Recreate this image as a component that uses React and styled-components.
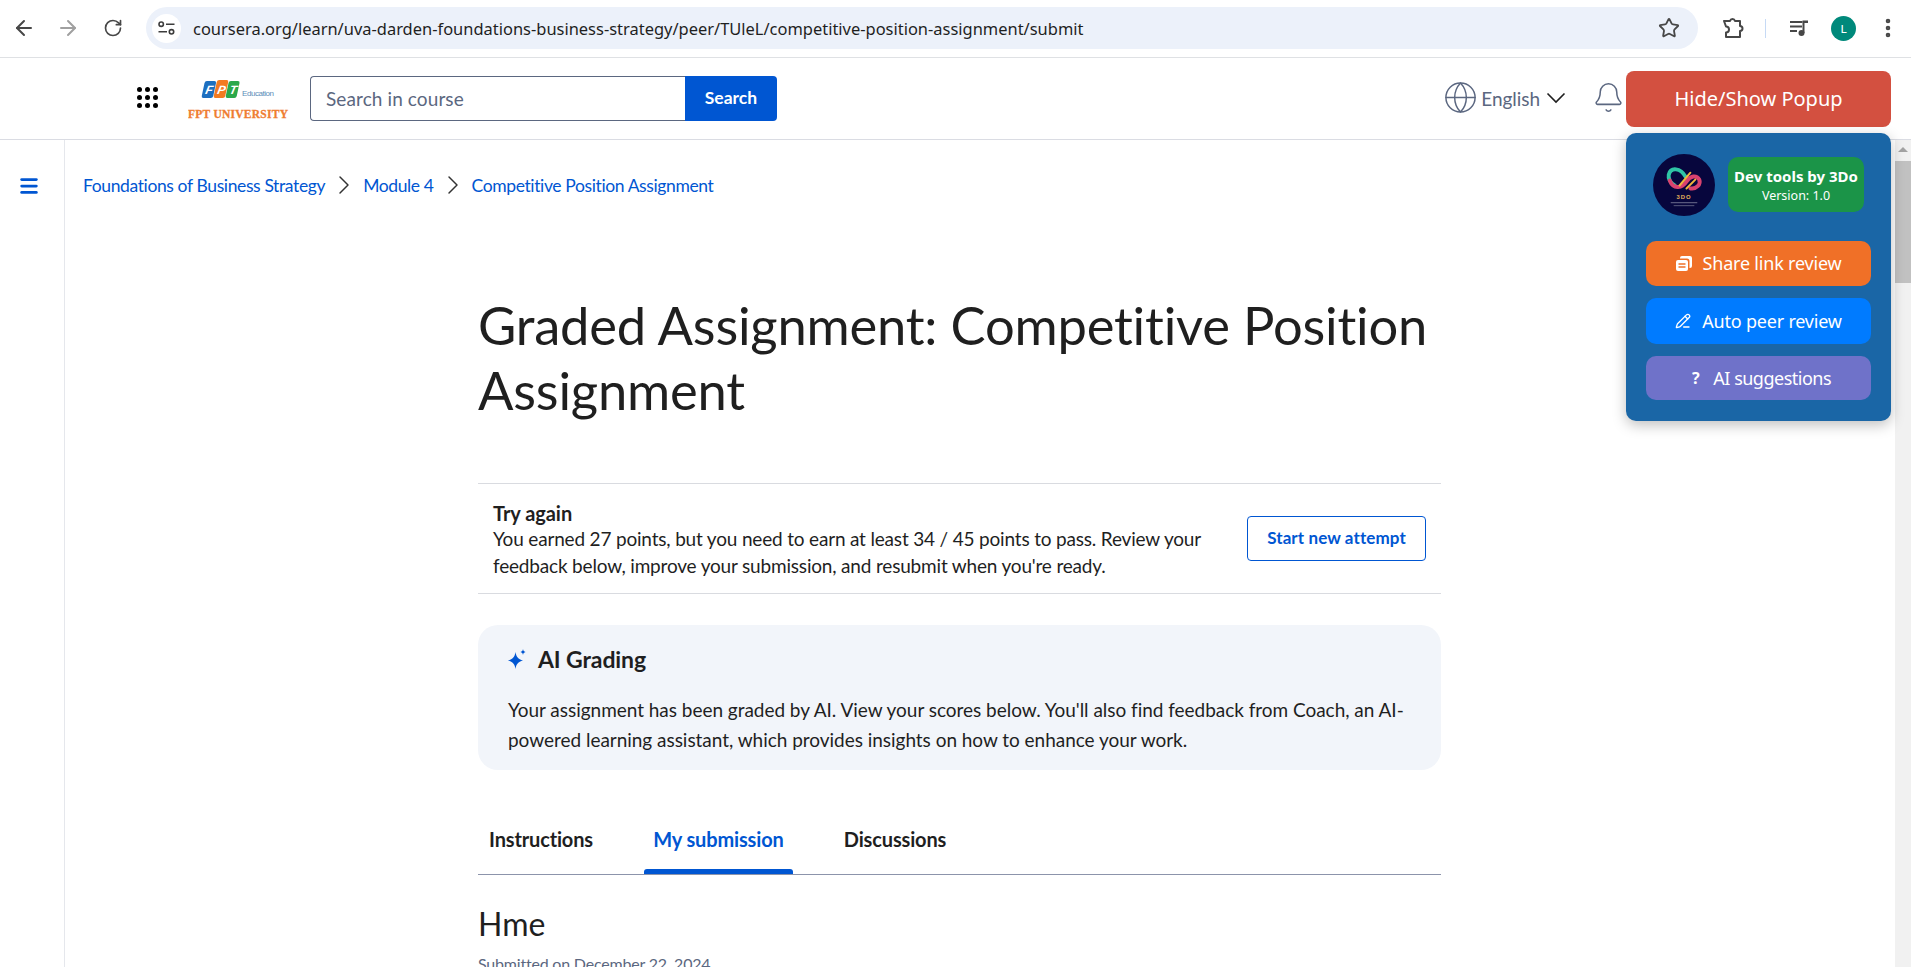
import React from 'react';
import styled, { createGlobalStyle } from 'styled-components';
import {
  ArrowLeft, ArrowRight, RotateCw, Star, EllipsisVertical, Globe, ChevronRight,
  Bell, Menu, PencilLine,
} from 'lucide-react';

const GlobalStyle = createGlobalStyle`
  html, body { margin: 0; padding: 0; height: 100%; overflow: hidden; background: #fff; }
  * { box-sizing: border-box; }
  body { font-family: "Lato", "Noto Sans", sans-serif; color: #1f1f1f; }
`;

const Page = styled.div`
  position: relative;
  height: 967px;
  display: flex;
  flex-direction: column;
  overflow: hidden;
`;

// barre du navigateur
const BrowserBar = styled.div`
  height: 58px;
  flex: none;
  display: flex;
  align-items: center;
  border-bottom: 1px solid #dfe1e4;
  padding: 0 0 1px 12px;
  color: #474747;
`;

const NavIcon = styled.span`
  width: 24px;
  height: 24px;
  display: flex;
  align-items: center;
  justify-content: center;
  margin-right: ${(p) => p.$gap}px;
  color: ${(p) => p.$color || '#474747'};
`;

const Omnibox = styled.div`
  width: 1552px;
  height: 42px;
  margin-right: 24px;
  border-radius: 21px;
  background: #ecf1fa;
  display: flex;
  align-items: center;
  padding: 0 18px 0 6px;
`;

const SiteChip = styled.span`
  width: 29px;
  height: 29px;
  border-radius: 50%;
  background: #fff;
  display: flex;
  align-items: center;
  justify-content: center;
`;

const UrlText = styled.span`
  flex: 1;
  margin-left: 12px;
  font-family: "Noto Sans", sans-serif;
  font-size: 16.47px;
  color: #1f1f1f;
`;

const ToolbarDivider = styled.span`
  width: 1px;
  height: 19px;
  background: #c6daf5;
  margin: 0 24px 0 21px;
`;

const Avatar = styled.span`
  width: 25px;
  height: 25px;
  border-radius: 50%;
  margin: 0 20px 0 23px;
  background: #00897b;
  color: #fff;
  font-size: 12px;
  display: flex;
  align-items: center;
  justify-content: center;
`;

// en-tête du cours
const Header = styled.header`
  height: 82px;
  flex: none;
  display: flex;
  align-items: center;
  border-bottom: 1px solid #dadce3;
  padding: 0 0 2px 137px;
`;

const DotGrid = styled.div`
  width: 21px;
  height: 21px;
  display: grid;
  grid-template-columns: repeat(3, 5px);
  grid-template-rows: repeat(3, 5px);
  justify-content: space-between;
  align-content: space-between;
  margin-right: 30px;
`;

const Dot = styled.span`
  border-radius: 50%;
  background: #000;
`;

const SearchGroup = styled.div`
  display: flex;
  height: 45px;
  margin-left: 18px;
  margin-top: 1px;
`;

const SearchField = styled.div`
  width: 375px;
  border: 1px solid #5b6780;
  border-right: none;
  border-radius: 4px 0 0 4px;
  display: flex;
  align-items: center;
  padding-left: 15px;
  font-size: 19px;
  letter-spacing: 0.1px;
  color: #5b6780;
`;

const SearchButton = styled.div`
  width: 92px;
  background: #0056d2;
  color: #fff;
  border-radius: 0 4px 4px 0;
  display: flex;
  align-items: center;
  justify-content: center;
  font-size: 17.5px;
  font-weight: 700;
  padding-bottom: 2px;
`;

const HeaderRight = styled.div`
  margin-left: auto;
  display: flex;
  align-items: center;
  margin-right: 286px;
  color: #5b6780;
`;

const Language = styled.span`
  font-size: 19px;
  margin: 2px 6px 0 3px;
  letter-spacing: -0.05px;
`;

const BellWrap = styled.span`
  display: flex;
  margin-left: 26px;
`;

// corps de page
const Body = styled.div`
  flex: 1;
  min-height: 0;
  display: flex;
`;

const Rail = styled.aside`
  width: 65px;
  flex: none;
  border-right: 1px solid #e5e7ec;
  padding: 35px 0 0 18px;
  color: #0056d2;
`;

const Main = styled.main`
  flex: 1;
  min-width: 0;
  padding: 0 0 0 18px;
  overflow: hidden;
`;

const Crumbs = styled.nav`
  display: flex;
  align-items: center;
  height: 24px;
  margin-top: 33px;
  font-size: 17.5px;
  letter-spacing: -0.38px;
  color: #0056d2;
`;

const CrumbArrow = styled.span`
  display: flex;
  margin: 0 3px;
  color: #333;
`;

const Column = styled.div`
  width: 963px;
  margin-left: 395px;
`;

const Title = styled.h1`
  margin: 95px 0 0;
  font-size: 52.5px;
  line-height: 65px;
  font-weight: 400;
  letter-spacing: -0.2px;
  color: #1f1f1f;
`;

const RetryRow = styled.section`
  margin-top: 61px;
  height: 111px;
  border-top: 1px solid #d9dbe0;
  border-bottom: 1px solid #d9dbe0;
  display: flex;
  align-items: center;
  justify-content: space-between;
  padding: 2px 15px 0;
`;

const RetryTitle = styled.div`
  font-size: 20px;
  font-weight: 700;
  line-height: 26px;
  letter-spacing: -0.05px;
`;

const RetryText = styled.div`
  width: 740px;
  font-size: 19px;
  line-height: 26.5px;
  letter-spacing: -0.18px;
`;

const AttemptButton = styled.div`
  width: 179px;
  height: 45px;
  flex: none;
  border: 1px solid #0056d2;
  border-radius: 4px;
  color: #0056d2;
  font-size: 17px;
  font-weight: 700;
  letter-spacing: 0.1px;
  display: flex;
  align-items: center;
  justify-content: center;
  padding-bottom: 2px;
  margin-top: -2px;
`;

const GradingCard = styled.section`
  margin-top: 31px;
  height: 145px;
  border-radius: 20px;
  background: #f2f5fa;
  padding: 18px 30px 0;
`;

const GradingHead = styled.div`
  display: flex;
  align-items: center;
  gap: 10px;
  height: 32px;
  font-size: 23px;
  font-weight: 700;
  letter-spacing: -0.1px;
`;

const GradingText = styled.p`
  margin: 20px 0 0;
  font-size: 19px;
  line-height: 30px;
  letter-spacing: -0.03px;
`;

const Tabs = styled.div`
  margin-top: 44px;
  height: 61px;
  border-bottom: 1px solid #8c94ab;
  display: flex;
  gap: 40px;
`;

const Tab = styled.div`
  position: relative;
  width: ${(p) => p.$w}px;
  padding-top: 13px;
  text-align: center;
  font-size: 20px;
  font-weight: 700;
  color: ${(p) => (p.$active ? '#0056d2' : '#1f1f1f')};
  letter-spacing: -0.15px;
  ${(p) => p.$active && `
    &::after {
      content: '';
      position: absolute;
      left: 0;
      right: 0;
      bottom: 0;
      height: 5px;
      background: #0056d2;
      border-radius: 3px 3px 0 0;
    }
  `}
`;

const SubmissionTitle = styled.h2`
  margin: 29px 0 0;
  font-size: 32px;
  line-height: 40px;
  font-weight: 400;
`;

const SubmittedOn = styled.div`
  margin-top: 10px;
  font-size: 16px;
  letter-spacing: -0.2px;
  color: #5b6780;
`;

const ScrollTrack = styled.div`
  width: 16px;
  flex: none;
  background: #f1f1f1;
  display: flex;
  flex-direction: column;
  align-items: center;
  padding-top: 7px;
`;

const ScrollArrow = styled.span`
  width: 0;
  height: 0;
  border-left: 5px solid transparent;
  border-right: 5px solid transparent;
  border-bottom: 5px solid #a3a3a3;
`;

const ScrollThumb = styled.span`
  width: 100%;
  height: 122px;
  margin-top: 9px;
  background: #c1c1c1;
`;

// popup de l'extension, au-dessus de la page
const PopupToggle = styled.div`
  position: absolute;
  top: 71px;
  right: 20px;
  width: 265px;
  height: 56px;
  border-radius: 8px;
  background: #d35040;
  color: #fff;
  font-family: "Noto Sans", sans-serif;
  font-size: 20px;
  display: flex;
  align-items: center;
  justify-content: center;
  padding-bottom: 2px;
`;

const PopupPanel = styled.div`
  position: absolute;
  top: 133px;
  right: 20px;
  width: 265px;
  height: 288px;
  border-radius: 10px;
  background: #1a66a6;
  box-shadow: 0 4px 14px rgba(0, 0, 0, 0.25);
  padding: 20px 20px 0;
  font-family: "Noto Sans", sans-serif;
  color: #fff;
`;

const PopupHead = styled.div`
  display: flex;
  align-items: center;
  height: 63px;
  margin-bottom: 25px;
  padding-left: 7px;
`;

const LogoCircle = styled.span`
  width: 62px;
  height: 62px;
  flex: none;
  display: block;
  border-radius: 50%;
  overflow: hidden;
  margin-right: 13px;
`;

const VersionBadge = styled.div`
  width: 136px;
  height: 55px;
  border-radius: 10px;
  background: #1b9448;
  display: flex;
  flex-direction: column;
  align-items: center;
  justify-content: center;
`;

const BadgeTitle = styled.div`
  font-size: 15px;
  font-weight: 700;
  line-height: 20px;
  white-space: nowrap;
`;

const BadgeVersion = styled.div`
  font-size: 12.5px;
  line-height: 17px;
  margin-top: 1px;
`;

const ActionButton = styled.div`
  height: ${(p) => p.$h}px;
  margin-bottom: 12px;
  border-radius: 10px;
  background: ${(p) => p.$bg};
  font-size: 18px;
  letter-spacing: -0.2px;
  display: flex;
  align-items: center;
  justify-content: center;
  gap: ${(p) => p.$gap || 11}px;
  padding: 0 0 1px ${(p) => p.$inset || 0}px;
`;

const QuestionMark = styled.span`
  font-weight: 700;
  font-size: 16px;
`;

const TightLabel = styled.span`
  letter-spacing: -0.5px;
`;

const TuneIcon = () => (
  <svg width="17" height="14" viewBox="0 0 17 14" fill="none" stroke="#3c3c3c" strokeWidth="1.6">
    <circle cx="3.200" cy="3.200" r="2.200" />
    <path d="M8 3.200h8.500M.5 10.800H9" />
    <circle cx="13.500" cy="10.800" r="2.200" />
  </svg>
);

const ExtensionIcon = () => (
  <svg width="22" height="22" viewBox="0 0 22 22" fill="none" stroke="#474747" strokeWidth="2" strokeLinejoin="round">
    <path d="M2 4h6a2.600 2.600 0 0 1 5 0h5v5a2.500 2.500 0 0 1 0 5v6H4v-4.500a2.800 2.800 0 0 0 0-6z" />
  </svg>
);

const MediaIcon = () => (
  <svg width="18" height="16" viewBox="0 0 18 16" fill="#474747">
    <rect x="0" y="1" width="12" height="2" />
    <rect x="0" y="5.500" width="12" height="2" />
    <rect x="0" y="10" width="7" height="2" />
    <circle cx="11.500" cy="13" r="3" />
    <rect x="12.500" y="1" width="2" height="12" />
    <rect x="12.500" y="0.500" width="5.500" height="2.500" />
  </svg>
);

const LangChevron = () => (
  <svg width="20" height="12" viewBox="0 0 20 12" fill="none" stroke="#1f1f1f" strokeWidth="1.600">
    <path d="M1.500 1.500L10 10l8.500-8.500" />
  </svg>
);

const PagesIcon = () => (
  <svg width="16" height="15" viewBox="0 0 16 15">
    <path d="M4 2.500V2a2 2 0 0 1 2-2h8a2 2 0 0 1 2 2v8a2 2 0 0 1-2 2h-.5V5a2.500 2.500 0 0 0-2.500-2.500z" fill="#fff" />
    <rect x="0" y="4" width="12" height="11" rx="2" fill="#fff" />
    <path d="M2.500 8h7M2.500 11h7" stroke="#f07027" strokeWidth="1.400" />
  </svg>
);

const FptLogo = () => (
  <svg width="104" height="44" viewBox="0 0 104 44">
    <g transform="skewX(-12)">
      <rect x="18" y="5" width="11.500" height="17" rx="2" fill="#1d6fc0" />
      <rect x="30" y="4" width="11.500" height="18" rx="2" fill="#f27b21" />
      <rect x="42" y="5" width="11" height="17" rx="2" fill="#2aa84a" />
      <text x="20.500" y="18" fontSize="12" fontWeight="700" fontStyle="italic" fill="#fff" fontFamily="Liberation Sans">F</text>
      <text x="32.500" y="18" fontSize="12" fontWeight="700" fontStyle="italic" fill="#fff" fontFamily="Liberation Sans">P</text>
      <text x="44.500" y="18" fontSize="12" fontWeight="700" fontStyle="italic" fill="#fff" fontFamily="Liberation Sans">T</text>
    </g>
    <text x="54" y="20" fontSize="8" fill="#5b8db8" fontFamily="Liberation Sans" textLength="32">Education</text>
    <text x="0" y="42" fontSize="11.500" fontWeight="700" fill="#ef7d31" stroke="#ef7d31" strokeWidth="0.3" fontFamily="Liberation Serif" textLength="100">FPT UNIVERSITY</text>
  </svg>
);

const ThreeDoLogo = () => (
  <svg width="62" height="62" viewBox="0 0 63 63">
    <rect width="63" height="63" fill="#07063d" />
    <path d="M33 23C28 14 18 13 16 21c-1 6 3 9 6 11" fill="none" stroke="#2fc4a5" strokeWidth="4" strokeLinecap="round" />
    <path d="M17 27c4 10 13 7 17 1 4-6 10-7 13-2 2 5-3 10-9 9" fill="none" stroke="#d9426f" strokeWidth="4" strokeLinecap="round" />
    <path d="M27 32l11-13M34 35l9-9" fill="none" stroke="#f0b63c" strokeWidth="2" strokeLinecap="round" />
    <text x="31.500" y="46" textAnchor="middle" fontSize="6" fontWeight="700" fill="#e6b35a" fontFamily="Liberation Sans" letterSpacing="1">3DO</text>
    <rect x="18" y="49" width="27" height="1" fill="#6f6f8f" />
    <rect x="21" y="52" width="21" height="1" fill="#5a5a7d" />
  </svg>
);

const Sparkle = () => (
  <svg width="20" height="20" viewBox="0 0 20 20" fill="#0056d2">
    <path d="M7.500 3c.8 5 2.500 7 7.500 8.500-5 1.500-6.700 3.500-7.500 8.500-.8-5-2.500-7-7.500-8.500 5-1.500 6.700-3.500 7.500-8.500z" />
    <path d="M15 0c.3 1.800 1 2.500 2.500 3-1.500.5-2.200 1.200-2.500 3-.3-1.800-1-2.500-2.500-3 1.500-.5 2.200-1.200 2.500-3z" />
  </svg>
);

const App = () => {
  return (
    <Page>
      <GlobalStyle />
      <BrowserBar>
        <NavIcon $gap={20}><ArrowLeft size={24} strokeWidth={2} /></NavIcon>
        <NavIcon $gap={21} $color="#a0a0a0"><ArrowRight size={24} strokeWidth={2} /></NavIcon>
        <NavIcon $gap={21}><RotateCw size={20} strokeWidth={2} /></NavIcon>
        <Omnibox>
          <SiteChip><TuneIcon /></SiteChip>
          <UrlText>coursera.org/learn/uva-darden-foundations-business-strategy/peer/TUleL/competitive-position-assignment/submit</UrlText>
          <Star size={22} strokeWidth={2} color="#474747" />
        </Omnibox>
        <ExtensionIcon />
        <ToolbarDivider />
        <MediaIcon />
        <Avatar>L</Avatar>
        <EllipsisVertical size={24} strokeWidth={2.6} color="#474747" />
      </BrowserBar>

      <Header>
        <DotGrid>
          {Array.from({ length: 9 }).map((_, i) => <Dot key={i} />)}
        </DotGrid>
        <FptLogo />
        <SearchGroup>
          <SearchField>Search in course</SearchField>
          <SearchButton>Search</SearchButton>
        </SearchGroup>
        <HeaderRight>
          <Globe size={35} strokeWidth={1} />
          <Language>English</Language>
          <LangChevron />
          <BellWrap><Bell size={33} strokeWidth={1.1} /></BellWrap>
        </HeaderRight>
      </Header>

      <Body>
        <Rail><Menu size={22} strokeWidth={3} /></Rail>
        <Main>
          <Crumbs>
            <span>Foundations of Business Strategy</span>
            <CrumbArrow><ChevronRight size={32} strokeWidth={1.1} /></CrumbArrow>
            <span>Module 4</span>
            <CrumbArrow><ChevronRight size={32} strokeWidth={1.1} /></CrumbArrow>
            <span>Competitive Position Assignment</span>
          </Crumbs>
          <Column>
            <Title>Graded Assignment: Competitive Position Assignment</Title>
            <RetryRow>
              <div>
                <RetryTitle>Try again</RetryTitle>
                <RetryText>You earned 27 points, but you need to earn at least 34 / 45 points to pass. Review your feedback below, improve your submission, and resubmit when you're ready.</RetryText>
              </div>
              <AttemptButton>Start new attempt</AttemptButton>
            </RetryRow>
            <GradingCard>
              <GradingHead><Sparkle />AI Grading</GradingHead>
              <GradingText>Your assignment has been graded by AI. View your scores below. You'll also find feedback from Coach, an AI-powered learning assistant, which provides insights on how to enhance your work.</GradingText>
            </GradingCard>
            <Tabs>
              <Tab $w={126}>Instructions</Tab>
              <Tab $w={149} $active>My submission</Tab>
              <Tab $w={124}>Discussions</Tab>
            </Tabs>
            <SubmissionTitle>Hme</SubmissionTitle>
            <SubmittedOn>Submitted on December 22, 2024</SubmittedOn>
          </Column>
        </Main>
        <ScrollTrack>
          <ScrollArrow />
          <ScrollThumb />
        </ScrollTrack>
      </Body>

      <PopupToggle>Hide/Show Popup</PopupToggle>
      <PopupPanel>
        <PopupHead>
          <LogoCircle><ThreeDoLogo /></LogoCircle>
          <VersionBadge>
            <BadgeTitle>Dev tools by 3Do</BadgeTitle>
            <BadgeVersion>Version: 1.0</BadgeVersion>
          </VersionBadge>
        </PopupHead>
        <ActionButton $bg="#f07027" $h={45}><PagesIcon />Share link review</ActionButton>
        <ActionButton $bg="#007bff" $h={46}><PencilLine size={16} strokeWidth={2} />Auto peer review</ActionButton>
        <ActionButton $bg="#6f72c9" $h={44} $gap={14} $inset={6}><QuestionMark>?</QuestionMark><TightLabel>AI suggestions</TightLabel></ActionButton>
      </PopupPanel>
    </Page>
  );
};

export default App;
